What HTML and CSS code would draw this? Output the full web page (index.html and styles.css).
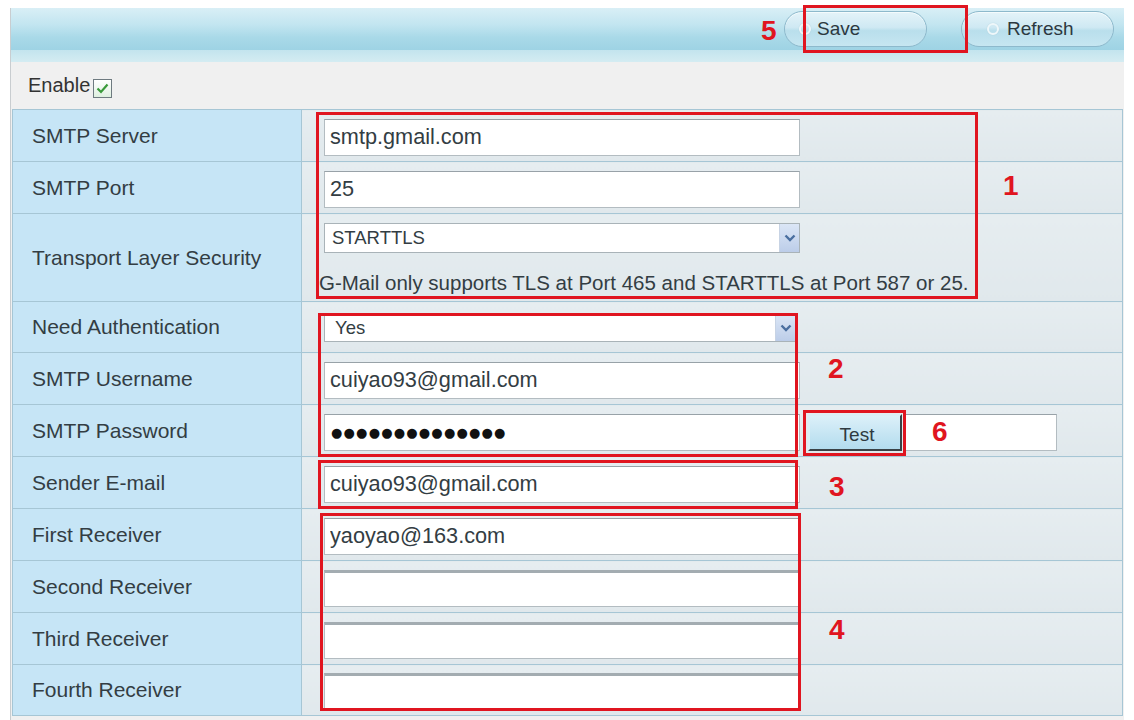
FILE: index.html
```html
<!DOCTYPE html>
<html>
<head>
<meta charset="utf-8">
<title>Mail Settings</title>
<link rel="stylesheet" href="styles.css">
</head>
<body>
<div class="page">
  <div class="toolbar">
    <button class="pill pill-save"><span class="ring"></span><span>Save</span></button>
    <button class="pill pill-refresh"><span class="ring"></span><span>Refresh</span></button>
  </div>
  <div class="strip"></div>
  <div class="enable">
    <span>Enable</span>
    <span class="check"><svg width="13" height="11" viewBox="0 0 13 11"><path d="M1.5 5.5 L5 9 L11.5 1.5" fill="none" stroke="#3a9a3a" stroke-width="2.2"/></svg></span>
  </div>
  <table class="form">
    <tr class="r52">
      <th>SMTP Server</th>
      <td><input class="field" type="text" value="smtp.gmail.com"></td>
    </tr>
    <tr class="r52">
      <th>SMTP Port</th>
      <td><input class="field" type="text" value="25"></td>
    </tr>
    <tr class="rtls">
      <th>Transport Layer Security</th>
      <td class="top">
        <div class="select sel-tls"><span>STARTTLS</span><span class="arrow"><svg width="12" height="8" viewBox="0 0 12 8"><path d="M1.5 1.5 L6 6 L10.5 1.5" fill="none" stroke="#4a6fa0" stroke-width="2.4"/></svg></span></div>
        <div class="hint">G-Mail only supports TLS at Port 465 and STARTTLS at Port 587 or 25.</div>
      </td>
    </tr>
    <tr class="r50">
      <th>Need Authentication</th>
      <td><div class="select sel-auth"><span>Yes</span><span class="arrow"><svg width="12" height="8" viewBox="0 0 12 8"><path d="M1.5 1.5 L6 6 L10.5 1.5" fill="none" stroke="#4a6fa0" stroke-width="2.4"/></svg></span></div></td>
    </tr>
    <tr class="r52">
      <th>SMTP Username</th>
      <td><input class="field" type="text" value="cuiyao93@gmail.com"></td>
    </tr>
    <tr class="r52">
      <th>SMTP Password</th>
      <td>
        <div class="pwrow">
          <div class="field dots">●●●●●●●●●●●●●●</div>
          <button class="test">Test</button>
          <input class="field small" type="text" value="">
        </div>
      </td>
    </tr>
    <tr class="r52">
      <th>Sender E-mail</th>
      <td><input class="field" type="text" value="cuiyao93@gmail.com"></td>
    </tr>
    <tr class="r52">
      <th>First Receiver</th>
      <td><input class="field" type="text" value="yaoyao@163.com"></td>
    </tr>
    <tr class="r52">
      <th>Second Receiver</th>
      <td><input class="field heavy" type="text" value=""></td>
    </tr>
    <tr class="r52">
      <th>Third Receiver</th>
      <td><input class="field heavy" type="text" value=""></td>
    </tr>
    <tr class="r50">
      <th>Fourth Receiver</th>
      <td><input class="field heavy" type="text" value=""></td>
    </tr>
  </table>
</div>

<div class="mark box1"></div>
<div class="mark box2"></div>
<div class="mark box3"></div>
<div class="mark box4"></div>
<div class="mark box5"></div>
<div class="mark box6"></div>
<div class="num n1">1</div>
<div class="num n2">2</div>
<div class="num n3">3</div>
<div class="num n4">4</div>
<div class="num n5">5</div>
<div class="num n6">6</div>
</body>
</html>
```

FILE: styles.css
```css
html, body {
  margin: 0;
  padding: 0;
  background: #ffffff;
  font-family: "Liberation Sans", Arial, sans-serif;
  color: #2f3a40;
}

.page {
  margin: 8px 0 0 10px;
  width: 1114px;
  height: 712px;
  background: #f0f0f0;
  border-left: 1px solid #c9cdd0;
  box-sizing: border-box;
}

.toolbar {
  height: 42px;
  display: flex;
  align-items: center;
  justify-content: flex-end;
  gap: 34px;
  padding-right: 10px;
  background: linear-gradient(#d9eff6 0%, #c2e5f0 40%, #a9d9e8 70%, #9ed3e4 100%);
  box-sizing: border-box;
}

.pill {
  height: 36px;
  border: 1px solid #8db9cc;
  border-radius: 18px;
  background: linear-gradient(#e4f3f9 0%, #cfe9f3 45%, #b9dfec 55%, #c6e6f1 100%);
  box-shadow: inset 0 1px 0 #f4fbfd;
  display: flex;
  align-items: center;
  gap: 8px;
  font-family: "Liberation Sans", Arial, sans-serif;
  font-size: 19px;
  color: #2c3840;
  padding: 0;
  box-sizing: border-box;
  margin-top: -1px;
}

.pill-save {
  width: 143px;
  padding-left: 14px;
  gap: 6px;
}

.pill-refresh {
  width: 153px;
  padding-left: 25px;
}

.ring {
  width: 8px;
  height: 8px;
  border: 2px solid #eef7fa;
  border-radius: 50%;
  box-shadow: 0 0 1px #9cc0cf;
}

.strip {
  height: 12px;
  background: linear-gradient(#c3e4ee, #d4ecf2);
}

.enable {
  height: 47px;
  display: flex;
  align-items: center;
  gap: 3px;
  padding-left: 17px;
  font-size: 20px;
  color: #333;
}

.check {
  width: 17px;
  height: 17px;
  border: 1px solid #6e7a80;
  background: linear-gradient(#ffffff, #dff0e0);
  display: flex;
  align-items: center;
  justify-content: center;
  margin-top: 5px;
}

.form {
  border-collapse: collapse;
  margin-left: 1px;
  width: 1111px;
  border: 1px solid #a8c7d5;
}

.form th {
  width: 289px;
  background: #c6e5f6;
  border: 1px solid #a6c6d5;
  text-align: left;
  font-weight: normal;
  font-size: 21px;
  color: #333d43;
  padding: 0 0 0 19px;
  box-sizing: border-box;
  vertical-align: middle;
}

.form td {
  background: linear-gradient(#e6edf0, #e0e8ec);
  border: 1px solid #a6c6d5;
  padding: 0 0 0 22px;
  vertical-align: middle;
}

.form td.top {
  vertical-align: top;
  padding-top: 9px;
}

.r52 { height: 52px; }
.r50 { height: 51px; }
.rtls { height: 88px; }

.field {
  display: block;
  width: 476px;
  height: 37px;
  border: 1px solid #b3bcc1;
  border-top: 1px solid #98a2a8;
  background: #ffffff;
  font-family: "Liberation Sans", Arial, sans-serif;
  font-size: 21.7px;
  color: #333d43;
  padding: 0 0 0 5px;
  box-sizing: border-box;
  margin-top: 3px;
}

.field.heavy {
  border-top: 3px solid #a3acb1;
}

.select {
  width: 476px;
  height: 30px;
  background: #ffffff;
  border: 1px solid #a9b3b8;
  display: flex;
  align-items: center;
  justify-content: space-between;
  font-size: 18.5px;
  color: #333d43;
  box-sizing: border-box;
  padding-left: 7px;
}

.sel-auth {
  width: 472px;
  height: 28px;
  padding-left: 10px;
  margin-top: 1px;
}

.arrow {
  width: 19px;
  height: 100%;
  background: linear-gradient(#dbe6f6, #bccde9);
  border-left: 1px solid #c7d3e4;
  display: flex;
  align-items: center;
  justify-content: center;
}

.hint {
  margin-top: 18px;
  margin-left: -5px;
  font-size: 20.5px;
  line-height: 24px;
  color: #333d43;
  white-space: nowrap;
}

.pwrow {
  display: flex;
  align-items: center;
  margin-top: 3px;
}

.dots {
  display: flex;
  align-items: center;
  margin-top: 0;
  font-family: "DejaVu Sans", sans-serif;
  font-size: 13px;
  letter-spacing: 1.2px;
  color: #111;
  padding-left: 6px;
}

.test {
  width: 94px;
  height: 37px;
  margin-left: 8px;
  background: linear-gradient(#dcf0f9, #b3dcee);
  border: 2px solid;
  border-color: #dbeef6 #3b4246 #3b4246 #dbeef6;
  font-family: "Liberation Sans", Arial, sans-serif;
  font-size: 19px;
  color: #2f3a40;
  padding: 6px 0 0 4px;
}

.field.small {
  width: 152px;
  margin: 0 0 0 3px;
}

.mark {
  position: absolute;
  border: 3px solid #e01520;
  box-sizing: border-box;
}

.box1 { left: 316px; top: 112px; width: 662px; height: 187px; }
.box2 { left: 318px; top: 313px; width: 480px; height: 144px; }
.box3 { left: 318px; top: 460px; width: 480px; height: 49px; }
.box4 { left: 320px; top: 513px; width: 481px; height: 198px; }
.box5 { left: 803px; top: 5px; width: 165px; height: 48px; }
.box6 { left: 803px; top: 410px; width: 103px; height: 46px; }

.num {
  position: absolute;
  font-family: "Liberation Sans", Arial, sans-serif;
  font-weight: bold;
  font-size: 28px;
  line-height: 28px;
  color: #e01520;
}

.n1 { left: 1003px; top: 172px; }
.n2 { left: 828px; top: 355px; }
.n3 { left: 829px; top: 473px; }
.n4 { left: 829px; top: 616px; }
.n5 { left: 761px; top: 17px; }
.n6 { left: 932px; top: 418px; }
```
